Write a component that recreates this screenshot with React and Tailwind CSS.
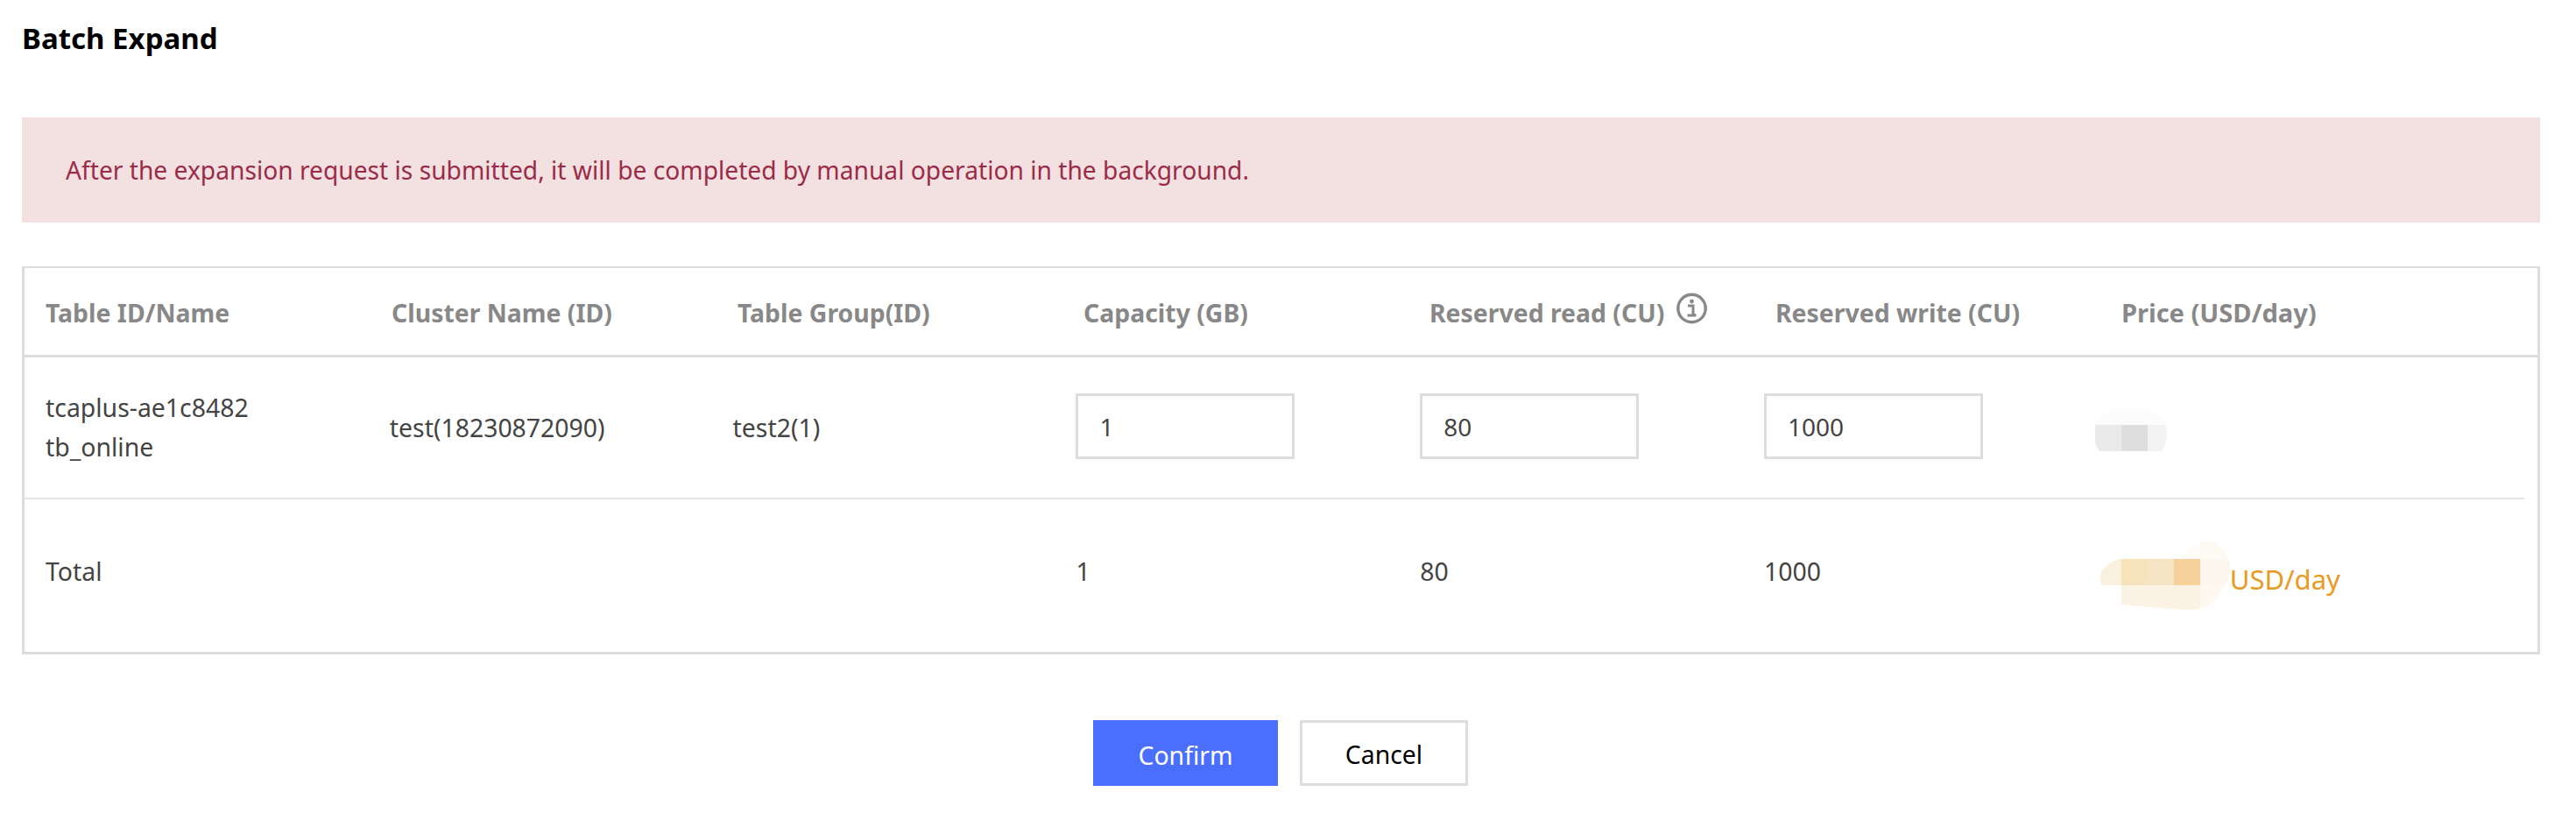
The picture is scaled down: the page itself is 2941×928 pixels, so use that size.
import React from "react";

function InfoIcon() {
  return (
    <svg width="35" height="36" viewBox="0 0 35 36" className="ml-[14px] mb-[6px] shrink-0">
      <circle cx="17.5" cy="18" r="15.7" fill="none" stroke="#888888" strokeWidth="3.4" />
      <circle cx="17.5" cy="10" r="2.4" fill="#888888" />
      <path d="M13 15h6v10.5h3M12.5 26h10" fill="none" stroke="#888888" strokeWidth="3" />
    </svg>
  );
}

function BlurGray() {
  return (
    <svg width="82" height="48" viewBox="0 0 82 48" className="block">
      <defs>
        <clipPath id="g">
          <path d="M0 18C4 6 16 0 30 0H52C68 0 82 10 82 28C82 36 79 43 76 48H5C2 44 0 40 0 36Z" />
        </clipPath>
      </defs>
      <g clipPath="url(#g)">
        <rect x="0" y="0" width="82" height="18" fill="#fcfcfc" />
        <rect x="0" y="18" width="30" height="30" fill="#eaeaea" />
        <rect x="30" y="18" width="30" height="30" fill="#dedede" />
        <rect x="60" y="18" width="22" height="30" fill="#f3f3f3" />
      </g>
    </svg>
  );
}

function BlurOrange() {
  return (
    <svg width="148" height="78" viewBox="0 0 148 78" className="block shrink-0">
      <defs>
        <clipPath id="o">
          <path d="M22 20C40 18 80 16 90 20C100 4 118 0 124 0C140 0 148 22 148 30C148 44 142 50 138 56C132 72 118 78 100 78C84 78 70 76 24 72C10 66 0 54 0 40C0 32 12 22 22 20Z" />
        </clipPath>
      </defs>
      <g clipPath="url(#o)">
        <rect x="0" y="0" width="148" height="20" fill="#fefcf8" />
        <rect x="114" y="0" width="34" height="20" fill="#fdfaf4" />
        <rect x="0" y="20" width="24" height="30" fill="#faf0de" />
        <rect x="24" y="20" width="30" height="30" fill="#f6e2bb" />
        <rect x="54" y="20" width="30" height="30" fill="#f6e5c4" />
        <rect x="84" y="20" width="30" height="30" fill="#f4d299" />
        <rect x="114" y="20" width="34" height="30" fill="#fcf6ec" />
        <rect x="0" y="50" width="24" height="28" fill="#fffefd" />
        <rect x="24" y="50" width="90" height="28" fill="#fcf3e4" />
        <rect x="114" y="50" width="34" height="28" fill="#fdf8f0" />
      </g>
    </svg>
  );
}

function NumberInput({ value }) {
  return (
    <input
      readOnly
      value={value}
      className="w-[250px] h-[75px] box-border border-[3px] border-[#dddddd] bg-white pl-[24px] pr-2 text-[28px] text-[#444444] outline-none"
    />
  );
}

const headers = ["Table ID/Name", "Cluster Name (ID)", "Table Group(ID)", "Capacity (GB)"];

export default function App() {
  return (
    <div className="w-[2941px] h-[928px] bg-white overflow-hidden pl-[25px] pr-[41px] font-['Noto_Sans',sans-serif]">
      <h1 className="h-[134px] pt-[22px] text-[33px] leading-[44px] font-bold text-black">Batch Expand</h1>

      <div className="h-[120px] flex items-center pl-[50px] bg-[#f3e1e2] text-[28.2px] text-[#9b2c48]">
        After the expansion request is submitted, it will be completed by manual operation in the background.
      </div>

      <div className="mt-[50px] h-[443px] border-x-[3px] border-t-2 border-b-[3px] border-[#dddddd] box-border">
        <div className="h-[102px] border-b-[3px] border-[#dddddd] grid grid-cols-[repeat(6,395px)_1fr] items-center text-[28.4px] font-bold text-[#888888]">
          {headers.map((h) => (
            <div key={h} className="pl-6 pt-[3px] whitespace-nowrap">{h}</div>
          ))}
          <div className="pl-6 whitespace-nowrap flex items-center">
            <span className="pt-[3px]">Reserved read (CU)</span>
            <InfoIcon />
          </div>
          <div className="pl-6 pt-[3px] whitespace-nowrap">Reserved write (CU)</div>
          <div className="pl-6 pt-[3px] whitespace-nowrap text-[29px]">Price (USD/day)</div>
        </div>

        <div className="mr-[15px] h-[162px] border-b-2 border-[#e5e5e5] grid grid-cols-[repeat(6,392.8px)_1fr] items-center text-[28.4px] text-[#444444]">
          <div className="pl-6 leading-[45px] -mt-[1px]">
            <div>tcaplus-ae1c8482</div>
            <div>tb_online</div>
          </div>
          <div className="pl-6 mt-0">test(18230872090)</div>
          <div className="pl-[23px] mt-0">test2(1)</div>
          <div className="pl-[22px] -mt-[3px]"><NumberInput value="1" /></div>
          <div className="pl-[22px] -mt-[3px]"><NumberInput value="80" /></div>
          <div className="pl-[22px] -mt-[3px]"><NumberInput value="1000" /></div>
          <div className="ml-[7px] mt-[6px]"><BlurGray /></div>
        </div>

        <div className="mr-[15px] h-[174px] grid grid-cols-[repeat(6,392.8px)_1fr] items-center text-[28.4px] text-[#444444]">
          <div className="pl-6 -mt-[10px]">Total</div>
          <div />
          <div />
          <div className="pl-[22px] -mt-[10px]">1</div>
          <div className="pl-[22px] -mt-[10px]">80</div>
          <div className="pl-[22px] -mt-[10px]">1000</div>
          <div className="ml-[13px] flex items-center">
            <BlurOrange />
            <span className="mt-[9px] text-[31px] text-[#e89a22] whitespace-nowrap">USD/day</span>
          </div>
        </div>
      </div>

      <div className="mt-[75px] ml-[1223px] flex gap-[25px] text-[28.4px]">
        <button className="w-[211px] h-[75px] pt-[5px] bg-[#4a6ffe] text-white">Confirm</button>
        <button className="w-[192px] h-[75px] pt-[3px] border-[3px] border-[#dddddd] bg-white text-black">Cancel</button>
      </div>
    </div>
  );
}
